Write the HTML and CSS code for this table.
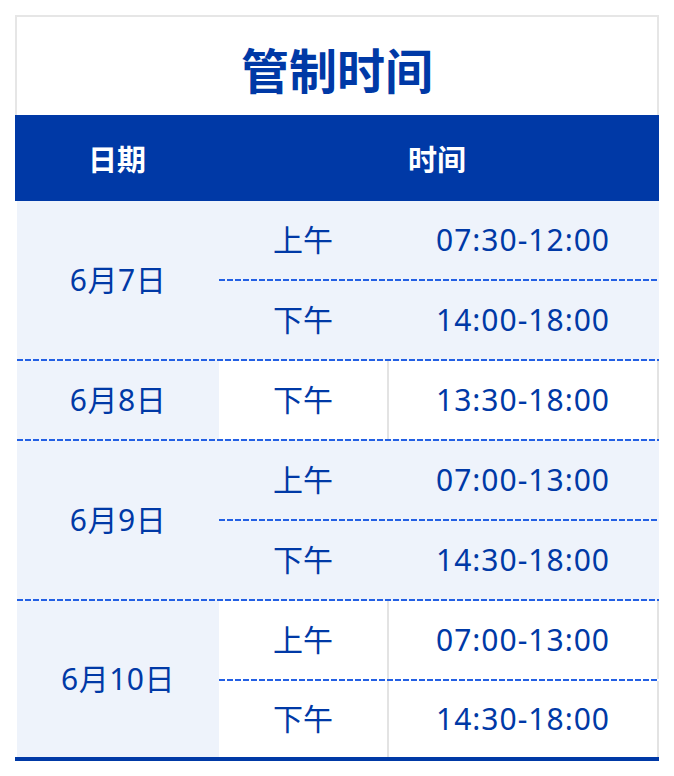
FILE: index.html
```html
<!DOCTYPE html>
<html lang="zh">
<head>
<meta charset="utf-8">
<title>管制时间</title>
<link rel="stylesheet" href="styles.css">
</head>
<body>
<div class="panel">
  <div class="title">管制时间</div>
  <div class="head">
    <div class="h-date">日期</div>
    <div class="h-time">时间</div>
  </div>
  <div class="body">
    <div class="group alt">
      <div class="date">6月7日</div>
      <div class="slots">
        <div class="slot"><span class="period">上午</span><span class="time">07:30-12:00</span></div>
        <div class="dash"></div>
        <div class="slot"><span class="period">下午</span><span class="time">14:00-18:00</span></div>
      </div>
    </div>
    <div class="dash"></div>
    <div class="group">
      <div class="date">6月8日</div>
      <div class="slots">
        <div class="slot"><span class="period">下午</span><span class="time">13:30-18:00</span></div>
      </div>
    </div>
    <div class="dash"></div>
    <div class="group alt">
      <div class="date">6月9日</div>
      <div class="slots">
        <div class="slot"><span class="period">上午</span><span class="time">07:00-13:00</span></div>
        <div class="dash"></div>
        <div class="slot"><span class="period">下午</span><span class="time">14:30-18:00</span></div>
      </div>
    </div>
    <div class="dash"></div>
    <div class="group last">
      <div class="date">6月10日</div>
      <div class="slots">
        <div class="slot"><span class="period">上午</span><span class="time">07:00-13:00</span></div>
        <div class="dash"></div>
        <div class="slot"><span class="period">下午</span><span class="time">14:30-18:00</span></div>
      </div>
    </div>
  </div>
</div>
</body>
</html>
```

FILE: styles.css
```css
html, body {
  margin: 0;
  padding: 0;
  background: #ffffff;
}

body {
  padding: 15px 0 0 15px;
  font-family: "Noto Sans", "Noto Sans CJK SC", sans-serif;
  color: #0039a6;
}

.panel {
  width: 644px;
}

.title {
  box-sizing: border-box;
  height: 100px;
  border: 2px solid #e6e6e6;
  border-bottom: none;
  display: flex;
  align-items: center;
  justify-content: center;
  padding-top: 4px;
  font-family: "Noto Sans CJK SC", sans-serif;
  font-size: 48px;
  font-weight: 700;
  color: #0039a6;
  line-height: 1;
}

.head {
  height: 86px;
  background: #0039a6;
  display: grid;
  grid-template-columns: 204px 1fr;
  align-items: center;
  color: #ffffff;
  font-family: "Noto Sans CJK SC", sans-serif;
  font-size: 29px;
  font-weight: 700;
  line-height: 1;
}

.h-date, .h-time {
  text-align: center;
}

.h-time {
  padding-right: 4px;
}

.body {
  padding-left: 2px;
  border-bottom: 4px solid #0039a6;
}

.group {
  display: grid;
  grid-template-columns: 202px 1fr;
  background: #ffffff;
}

.date {
  background: #eef3fb;
  display: flex;
  align-items: center;
  justify-content: center;
  font-size: 30px;
  letter-spacing: 0.5px;
  line-height: 1;
}

.slots {
  display: flex;
  flex-direction: column;
}

.slot {
  height: 78px;
  display: grid;
  grid-template-columns: 168px 1fr;
  align-items: center;
  font-size: 30px;
  line-height: 1;
  background: #ffffff;
}

.group.last .slot:last-child {
  height: 76px;
}

.period {
  text-align: center;
}

.time {
  box-sizing: border-box;
  height: 100%;
  display: flex;
  align-items: center;
  justify-content: center;
  letter-spacing: 1px;
  border-left: 2px solid #e3e3e3;
  border-right: 2px solid #e3e3e3;
}

.group.alt .slot {
  background: #eef3fb;
}

.group.alt .time {
  border-color: #eef3fb;
}

.dash {
  height: 2px;
  background-color: #eef3fb;
  background-image: repeating-linear-gradient(to right, #2360e4 0 6px, transparent 6px 8px);
}

.group:not(.alt) .slots .dash {
  background-color: #ffffff;
}
```
